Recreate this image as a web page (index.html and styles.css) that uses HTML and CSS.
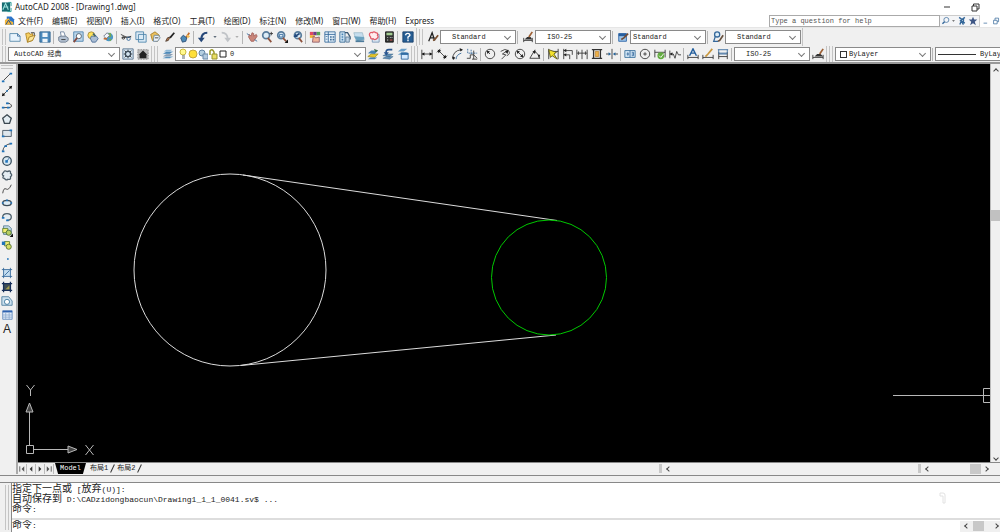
FILE: index.html
```html
<!DOCTYPE html>
<html lang="zh-CN">
<head>
<meta charset="utf-8">
<title>AutoCAD 2008 - [Drawing1.dwg]</title>
<link rel="stylesheet" href="styles.css">
</head>
<body>
<header class="titlebar">
  <svg class="app-icon" viewBox="0 0 12 12"><rect x="1" y="1" width="9" height="10" fill="#176d72"/><path d="M2 9 5 2l3 7M3 6h5" stroke="#9ee0dc" fill="none" stroke-width="1.2"/><path d="M8 1h3v4M7 11h4V7" stroke="#2a9d97" fill="none"/></svg>
  <h1>AutoCAD 2008 - [Drawing1.dwg]</h1>
  <div class="window-buttons">
    <button aria-label="Minimize"><svg viewBox="0 0 10 10"><path class="k" d="M2 5h6"/></svg></button>
    <button aria-label="Restore"><svg viewBox="0 0 10 10"><path class="k" d="M2 4h5v5H2zM3.500 4V2H9v5H7"/></svg></button>
  </div>
</header>
<nav class="menubar">
  <svg class="app-icon" viewBox="0 0 12 12"><path d="M3 1h5l3 3v6H3z" fill="#2c74c9"/><path d="M1 5l4-2 2 3 3 1v3H1z" fill="#f3b63b"/><path d="M2 10l3-5 3 5" stroke="#174b92" fill="none"/></svg>
  <div class="menus">
    <button>文件(F)</button><button>编辑(E)</button><button>视图(V)</button><button>插入(I)</button><button>格式(O)</button><button>工具(T)</button><button>绘图(D)</button><button>标注(N)</button><button>修改(M)</button><button>窗口(W)</button><button>帮助(H)</button><button>Express</button>
  </div>
  <div class="help">
    <input type="text" aria-label="Help" placeholder="Type a question for help">
    <div class="help-buttons">
      <button aria-label="Search"><svg viewBox="0 0 14 14"><circle cx="7.500" cy="5.500" r="3.500" class="b" fill="#dce9f8"/><path class="b w" d="M5 8l-3 3"/></svg></button>
      <button aria-label="Search options" class="dot"><svg viewBox="0 0 4 14"><path d="M0 6h4L2 8z" fill="#555"/></svg></button>
      <button aria-label="Communication"><svg viewBox="0 0 14 14"><path class="b w" d="M3 2l4 3 4-3M4 12l2-5 3 5M4 6l7 4M9 3v5"/></svg></button>
      <button aria-label="Favorites"><svg viewBox="0 0 14 14"><path d="M7 1l1.700 4H13L9.500 8l1.500 5-4-3-4 3 1.500-5L1 5h4.300z" fill="#3e5685"/></svg></button>
    </div>
    <button class="doc" aria-label="Minimize drawing"><svg viewBox="0 0 14 14"><path class="b" d="M5 10h5"/></svg></button>
    <button class="doc" aria-label="Restore drawing"><svg viewBox="0 0 14 14"><path class="b" d="M5 6h5v5H5zM7 6V3h5v5h-2"/></svg></button>
  </div>
</nav>

<div class="toolrow row-a">
  <div class="toolbar">
    <i class="grip"></i>
    <div class="g g3">
      <button aria-label="New"><svg viewBox="0 0 14 14"><path d="M1 3h9l3 3v6H1z" fill="#e8f3fc" stroke="#5487aa"/><path class="b" d="M10 3v3h3"/></svg></button>
      <button aria-label="Open"><svg viewBox="0 0 14 14"><path d="M2 3l4-1 1 2 3-1v8l-6 2z" fill="#f6cf62" stroke="#b18421"/><path d="M4 13l2-6 7-2-3 6z" fill="#fbe59b" stroke="#a47c23"/><path d="M8 2l4 0v3" class="k"/></svg></button>
      <button aria-label="Save"><svg viewBox="0 0 14 14"><path d="M1 1h12v12H1z" fill="#4b8abd" stroke="#31658f"/><path d="M4 2h6v5H4zM4 9h6v4H4z" fill="#eef5fa"/></svg></button>
    </div><i class="sep"></i>
    <div class="g g4">
      <button aria-label="Plot"><svg viewBox="0 0 14 14"><path d="M4 1h4l2 6H5z" fill="#fff" stroke="#69809b"/><path d="M2 7l3-1h5l3 2v3l-3 2H4l-2-2z" fill="#b3c1d2" stroke="#6c7b8e"/><path class="k" d="M5 10h5"/></svg></button>
      <button aria-label="Plot preview"><svg viewBox="0 0 14 14"><path d="M2 1h11v11H2z" fill="#b9d5ea" stroke="#4c82ad"/><circle cx="8" cy="6" r="3" fill="#fff" stroke="#456"/><path d="M6 8l-4 5" stroke="#87483c" stroke-width="2"/></svg></button>
      <button aria-label="Publish"><svg viewBox="0 0 14 14"><circle cx="5" cy="5" r="4" fill="#ffe25a" stroke="#9f8540"/><path d="M5 6h6l2 3-3 4H6L4 9z" fill="#aabdd4" stroke="#496c96"/><path d="M7 3l3 3" stroke="#42666e" stroke-width="2"/></svg></button>
      <button aria-label="3D DWF"><svg viewBox="0 0 14 14"><circle cx="8" cy="7" r="5" fill="#4b97c5"/><path d="M7 3l3-1 1 4-3 2zM8 10l3-1-1 3z" fill="#76ac4a"/><path d="M2 6l4-4 3 3-4 4z" fill="#f0f5fa" stroke="#778"/><path d="M2 9h4" stroke="#c36b34" stroke-width="2"/></svg></button>
    </div><i class="sep"></i>
    <div class="g g5">
      <button aria-label="Cut"><svg viewBox="0 0 14 14"><path class="k" d="M1 4l8 4 4-2M2 8l6-1h5"/><circle cx="10" cy="9" r="2" class="b"/><circle cx="4" cy="8" r="1.500" class="k"/></svg></button>
      <button aria-label="Copy"><svg viewBox="0 0 14 14"><path d="M1 1h9v9H1zM4 4h9v9H4z" fill="#dcebf6" stroke="#4b83aa"/></svg></button>
      <button aria-label="Paste"><svg viewBox="0 0 14 14"><path d="M2 4l5-3 5 4-2 7-6-1z" fill="#ecc15d" stroke="#a37b27"/><path d="M6 5h5l2 3-3 4H5z" fill="#edf3f8" stroke="#66839d"/><path class="k" d="M7 8h4"/></svg></button>
      <button aria-label="Match properties"><svg viewBox="0 0 14 14"><path d="M12 2L7 8" stroke="#222" stroke-width="2"/><path d="M7 7l-2 4-3 1 2-4z" fill="#bc7847" stroke="#4b3c31"/></svg></button>
      <button aria-label="Block editor"><svg viewBox="0 0 14 14"><path d="M12 2L8 8" stroke="#c36e2b" stroke-width="2"/><path d="M2 8l3-3 4 3-1 4-4 1z" fill="#4d8bb8" stroke="#284a70"/><path d="M9 4l4 2-3 3z" fill="#f3bf58"/></svg></button>
    </div><i class="sep"></i>
    <div class="g undo">
      <button aria-label="Undo"><svg viewBox="0 0 14 14"><path d="M12 2C7 2 5 5 5 10" stroke="#254779" stroke-width="2.500" fill="none"/><path d="M1 8h8l-4 5z" fill="#254779"/></svg></button>
      <button class="dot" aria-label="Undo list"><svg viewBox="0 0 4 14"><path d="M0 6h4L2 8z" fill="#345"/></svg></button>
      <button aria-label="Redo"><svg viewBox="0 0 14 14"><path d="M2 2c5 0 7 3 7 8" stroke="#c1c4c8" stroke-width="2" fill="none"/><path d="M5 8h8l-4 5z" fill="#c1c4c8"/></svg></button>
      <button class="dot" aria-label="Redo list"><svg viewBox="0 0 4 14"><path d="M0 6h4L2 8z" fill="#999"/></svg></button>
    </div><i class="sep"></i>
    <div class="g g4">
      <button aria-label="Pan"><svg viewBox="0 0 14 14"><path d="M3 7l1-3 2 2 1-4 2 1v3l3-2 1 2-4 6H6z" fill="#c98579" stroke="#a4625b"/><path class="b" d="M1 3l3 2M10 10l3 2"/></svg></button>
      <button aria-label="Zoom realtime"><svg viewBox="0 0 14 14"><circle class="lens" cx="6" cy="5" r="4"/><path class="handle" d="M8 8l4 5"/><path class="k" d="M10 3h4M12 1v4"/></svg></button>
      <button aria-label="Zoom window"><svg viewBox="0 0 14 14"><circle class="lens" cx="6" cy="5" r="4"/><path class="handle" d="M8 8l4 4"/><path class="b" d="M4 4h4v3H4z"/><path d="M14 10v4h-4z" fill="#111"/></svg></button>
      <button aria-label="Zoom previous"><svg viewBox="0 0 14 14"><circle class="lens" cx="8" cy="5" r="4"/><path class="handle" d="M9 8l4 5"/><path d="M10 3L5 6" stroke="#224a7f" stroke-width="2"/><path d="M3 7l2-4 3 4z" fill="#224a7f"/></svg></button>
    </div><i class="sep"></i>
    <div class="g g6">
      <button aria-label="Properties"><svg viewBox="0 0 14 14"><path fill="#df4962" d="M1 1h4v4H1z"/><path fill="#6d3984" d="M5 1h4v4H5z"/><path fill="#52a353" d="M9 1h4v4H9z"/><path fill="#efb52d" d="M1 5h6v3H1z"/><path d="M4 13l1-7 3 2 4-1v6z" fill="#f0b39a" stroke="#8c5c6b"/></svg></button>
      <button aria-label="DesignCenter"><svg viewBox="0 0 14 14"><path d="M1 1h12v12H1z" fill="#e7f2fb" stroke="#356b9a"/><path class="b" d="M5 1v12M1 4h12"/><path d="M7 6h2v2H7zm3 0h2v2h-2zM7 9h2v2H7zm3 0h2v2h-2zM2 6h2v1H2zm0 3h2v1H2z" fill="#416f9a"/></svg></button>
      <button aria-label="Tool palettes"><svg viewBox="0 0 14 14"><path d="M1 1h6v12H1z" fill="#d6e8f7" stroke="#2f628f"/><path d="M3 3h2v2H3zm0 3h2v2H3zm0 3h2v2H3z" fill="#4883b2"/><path d="M7 2h3l3 5v3" fill="none" stroke="#395873" stroke-width="1.500"/><path d="M8 7h4v6H8z" fill="#bfd3e5" stroke="#5d7d99"/></svg></button>
      <button aria-label="Sheet set"><svg viewBox="0 0 14 14"><path d="M1 2h10l2 8-9 2z" fill="#c5deee" stroke="#a2bdcc"/><path d="M1 6l12 1v3L5 12z" fill="#6ba2bf"/><path d="M3 12h10" stroke="#4d7b9b" stroke-width="2"/></svg></button>
      <button aria-label="Markup"><svg viewBox="0 0 14 14"><path d="M5 4h8v9H5z" fill="#d8e8f4" stroke="#7895b3"/><path d="M2 3q1-2 3-1 2-2 4 0 3 0 2 3 2 2-1 4-2 2-4 0-3 1-3-2-2-2-1-4z" fill="#ffecee" stroke="#e15b69" stroke-width="1.500"/></svg></button>
      <button aria-label="Calculator"><svg viewBox="0 0 14 14"><path d="M3 1h9v12H3z" fill="#343635" stroke="#111"/><path d="M4 2h7v3H4z" fill="#a3cc91"/><path d="M5 7h1v1H5zm3 0h1v1H8zm2 0h1v1h-1zM5 10h1v1H5z" fill="#fff"/><path d="M8 10h3v1H8z" fill="#e55"/></svg></button>
    </div><i class="sep"></i>
    <div class="g g1"><button aria-label="Help"><svg viewBox="0 0 14 14"><path d="M1 1h12v12H1z" fill="#275e94" stroke="#183f69"/><path d="M4 5q1-3 4-2 3 2-1 4v2M7 10v2" stroke="#fff" stroke-width="1.600" fill="none"/></svg></button></div>
  </div>
  <div class="toolbar styles">
    <i class="grip"></i>
    <div class="g g1"><button aria-label="Text style"><svg viewBox="0 0 14 14"><path d="M2 12L6 2l3 9M4 8h5" stroke="#222" stroke-width="1.500" fill="none"/><path d="M13 5l-4 5-2 1" stroke="#7d5132" stroke-width="2" fill="none"/></svg></button></div>
    <label class="combo pad"><select aria-label="Text style"><option>Standard</option></select></label><i class="sep wide"></i>
    <div class="g g1"><button aria-label="Dimension style"><svg viewBox="0 0 14 14"><path class="k" d="M2 8v5M12 8v5M2 11h10"/><path d="M3 10l3-3h4l2 3z" fill="#333"/><path d="M12 1L8 7" stroke="#9d6035" stroke-width="2"/></svg></button></div>
    <label class="combo pad"><select aria-label="Dimension style"><option>ISO-25</option></select></label><i class="sep wide"></i>
    <div class="g g1"><button aria-label="Table style"><svg viewBox="0 0 14 14"><path d="M2 3h9v9H2z" fill="#9bc3e8" stroke="#2c65a7"/><path d="M2 3h9v3H2z" fill="#285f9f"/><path d="M13 3L8 8l-3 2" stroke="#704b36" stroke-width="2" fill="none"/></svg></button></div>
    <label class="combo"><select aria-label="Table style"><option>Standard</option></select></label><i class="sep wide"></i>
    <div class="g g1"><button aria-label="Multileader style"><svg viewBox="0 0 14 14"><circle cx="6" cy="4" r="3" stroke="#35689a" stroke-width="1.500" fill="#dcecf7"/><path d="M4 6l-2 6h5" stroke="#35689a" stroke-width="1.500" fill="none"/><path d="M13 5l-4 6-2 1" stroke="#66503e" stroke-width="2" fill="none"/></svg></button></div>
    <label class="combo pad"><select aria-label="Multileader style"><option>Standard</option></select></label>
  </div>
</div>

<div class="toolrow row-b">
  <div class="toolbar">
    <i class="grip"></i>
    <label class="combo workspace"><select aria-label="Workspace"><option>AutoCAD 经典</option></select></label>
    <div class="g g2">
      <button aria-label="Workspace settings"><svg viewBox="0 0 14 14"><path d="M1 1h12v12H1z" fill="#d4e4f0" stroke="#55718d"/><circle cx="7" cy="7" r="3" stroke="#3a4c5c" stroke-width="1.500" fill="none"/><path class="k" d="M7 2v2M7 10v2M2 7h2M10 7h2M3 3l2 2M9 9l2 2M11 3L9 5M5 9l-2 2"/></svg></button>
      <button aria-label="My workspace"><svg viewBox="0 0 14 14"><path d="M1 2h12v11H1z" fill="#bbb" stroke="#888" stroke-dasharray="2 1"/><path d="M2 8l5-5 5 5h-1v4H3V8z" fill="#222"/></svg></button>
    </div>
  </div>
  <div class="toolbar">
    <i class="grip"></i>
    <div class="g g1"><button aria-label="Layers"><svg viewBox="0 0 14 14"><path d="M1 10l4-3h8l-4 3z" fill="#8a9eb3"/><path d="M1 7l4-3h8l-4 3zM1 12l4-2h8l-4 2z" fill="#4d88b7" stroke="#c1d6e7" stroke-width=".5"/><path d="M2 4l3-2h7L9 4z" fill="#8eb9d8"/></svg></button></div>
    <label class="combo layer"><span class="layer-icons">
      <svg viewBox="0 0 10 12"><circle cx="5" cy="4" r="3" fill="#fff98e" stroke="#cbb83e"/><path d="M4 8h3M4 10h3" stroke="#5c6870"/></svg>
      <svg viewBox="0 0 10 12"><circle cx="5" cy="6" r="4" fill="#ffdf38" stroke="#c6a83b"/></svg>
      <svg viewBox="0 0 10 12"><circle cx="4" cy="5" r="3" fill="#b5cfe0" stroke="#6284a5"/><path d="M5 6h5v5H5z" fill="#b3cbdf" stroke="#6a89a7"/></svg>
      <svg viewBox="0 0 10 12"><path d="M2 7V3q2-3 4 1v3" fill="none" stroke="#99992b" stroke-width="1.500"/><path d="M4 6h5v5H4z" fill="#e9de65" stroke="#979331"/></svg>
      <svg viewBox="0 0 10 12"><path d="M2 3h6v6H2z" fill="#fff" stroke="#222"/></svg>
      </span><select aria-label="Layer"><option>0</option></select></label>
    <div class="g g3">
      <button aria-label="Make current"><svg viewBox="0 0 14 14"><path d="M1 10l4-3h8l-4 4z" fill="#e3c52e" stroke="#a5972b"/><path d="M1 6l4-3h8L9 7zM1 13l3-2h8l-3 2z" fill="#4783b3"/><path d="M8 1l2 4 3-2" fill="#416f4d"/></svg></button>
      <button aria-label="Layer previous"><svg viewBox="0 0 14 14"><path d="M1 9l4-2h8l-4 3zM1 12l4-2h8l-4 3z" fill="#618eb5" stroke="#345e83" stroke-width=".5"/><path d="M12 2H8Q4 2 5 6" stroke="#2b568f" stroke-width="2" fill="none"/><path d="M2 5h6L5 9z" fill="#2b568f"/></svg></button>
      <button aria-label="Layer states"><svg viewBox="0 0 14 14"><path d="M1 4l4-3h7L8 4zM1 8l4-3h7L8 8z" fill="#6b9fc8"/><path d="M5 6h8v7H5z" fill="#d5eaff" stroke="#275f97"/><path d="M5 6h8v2H5z" fill="#27659e"/></svg></button>
    </div>
  </div>
  <div class="toolbar">
    <i class="grip"></i>
    <div class="g g4">
      <button aria-label="Linear"><svg viewBox="0 0 14 14"><path class="k" d="M1 2v11M13 2v11M1 7h12"/><path d="M1 7l3-2v4zM13 7l-3-2v4z" fill="#111"/></svg></button>
      <button aria-label="Aligned"><svg viewBox="0 0 14 14"><path class="k" d="M1 5l4-4M9 13l4-4M3 3l8 8"/><path d="M2 2l4 1-3 3zM12 12L8 11l3-3z" fill="#111"/></svg></button>
      <button aria-label="Arc length"><svg viewBox="0 0 14 14"><path class="k" d="M2 13Q2 3 12 2"/><path class="b" d="M6 13q0-5 6-7"/><path d="M10 0l4 2-3 2zM1 10l2 4 2-3z" fill="#222"/></svg></button>
      <button aria-label="Ordinate"><svg viewBox="0 0 14 14"><path class="b" stroke-dasharray="2 1" d="M2 1v5h11M6 2v5"/><path class="k" d="M1 12h4V8h4l4 4M9 3v10M7 13h6"/></svg></button>
    </div><i class="sep"></i>
    <div class="g g4">
      <button aria-label="Radius"><svg viewBox="0 0 14 14"><circle class="k" cx="7" cy="7" r="5.500"/><path class="k" d="M7 7L4 4"/><path d="M3 3l4 1-3 3z" fill="#222"/></svg></button>
      <button aria-label="Jogged"><svg viewBox="0 0 14 14"><path class="k" d="M2 4q5-4 9-1 3 4-2 6M3 13l5-5-4-1 6-4"/><path d="M11 2l-1 5-3-3z" fill="#222"/></svg></button>
      <button aria-label="Diameter"><svg viewBox="0 0 14 14"><circle class="k" cx="7" cy="7" r="5.500"/><path class="k" d="M4 4l6 6"/><path d="M3 3l4 1-3 3zM11 11l-4-1 3-3z" fill="#222"/></svg></button>
      <button aria-label="Angular"><svg viewBox="0 0 14 14"><path class="k" d="M13 12H1l6-10M5 4q6 1 7 8"/><path d="M4 4l4-1-1 4zM10 8l3 0-1 4z" fill="#222"/></svg></button>
    </div><i class="sep"></i>
    <div class="g g5">
      <button aria-label="Quick dimension"><svg viewBox="0 0 14 14"><path class="k" d="M2 1v12M13 1v12M2 4h11"/><path d="M2 2l9 3-3 2 4 6-6-4-2 2z" fill="#f4e22c" stroke="#555316"/></svg></button>
      <button aria-label="Baseline"><svg viewBox="0 0 14 14"><path class="k" d="M2 1v12M2 3h10v5M2 8h7v5"/><path d="M2 3l3-2v4zM2 8l3-2v4z" fill="#222"/></svg></button>
      <button aria-label="Continue"><svg viewBox="0 0 14 14"><path class="k" d="M1 2v11M7 2v11M13 2v11M1 6h12M3 4v4M11 4v4"/></svg></button>
      <button aria-label="Dimension space"><svg viewBox="0 0 14 14"><path class="k" stroke-width="1.500" d="M1 2h12M1 12h12M3 2v10M11 2v10"/><path d="M5 4h4v6H5z" fill="#edb047" stroke="#c28b3a"/></svg></button>
      <button aria-label="Dimension break"><svg viewBox="0 0 14 14"><path class="k" d="M7 1v12M0 7h4M10 7h4"/><path d="M6 7L3 5v4zM8 7l3-2v4z" fill="#26669e"/></svg></button>
    </div><i class="sep"></i>
    <div class="g g4">
      <button aria-label="Tolerance"><svg viewBox="0 0 14 14"><path d="M1 3h12v8H1z" fill="#d4e7f6" stroke="#376e9a"/><path class="b" d="M7 3v8M3 7h3M4.500 5v4M9 5h2v4H9M9 7h2"/></svg></button>
      <button aria-label="Center mark"><svg viewBox="0 0 14 14"><circle class="k" cx="7" cy="7" r="5.500"/><path class="k" d="M5 7h4M7 5v4"/></svg></button>
      <button aria-label="Inspection"><svg viewBox="0 0 14 14"><path class="k" d="M1 2v9M13 2v9M1 5h12"/><circle cx="8" cy="9" r="4" fill="#63ac40"/><path d="M6 9l2 2 3-4" stroke="#fff" fill="none"/></svg></button>
      <button aria-label="Jogged linear"><svg viewBox="0 0 14 14"><path class="k" d="M1 3v9M1 7h4l2 5 2-8 2 4h3"/><path d="M1 7l3-2v4z" fill="#222"/></svg></button>
    </div><i class="sep"></i>
    <div class="g g3">
      <button aria-label="Dimension edit"><svg viewBox="0 0 14 14"><path class="k" d="M1 8v5M13 8v5M1 11h12"/><path d="M3 9l4-8 4 8M5 6h4" stroke="#245f9d" stroke-width="1.700" fill="none"/></svg></button>
      <button aria-label="Text edit"><svg viewBox="0 0 14 14"><path class="k" d="M1 8v5M13 8v5M1 11h12"/><path d="M12 1L7 7l-3 3" stroke="#c7963d" stroke-width="2" fill="none"/></svg></button>
      <button aria-label="Dimension update"><svg viewBox="0 0 14 14"><path class="k" d="M2 5v8M12 5v8M2 10h10"/><path class="b" d="M1 2h12M2 2v4h10V2M2 7h10"/></svg></button>
    </div><i class="sep"></i>
    <label class="combo pad"><select aria-label="Dimension style control"><option>ISO-25</option></select></label>
    <div class="g g1"><button aria-label="Dimension style manager"><svg viewBox="0 0 14 14"><path class="k" d="M1 8v5M13 8v5M1 11h12"/><path d="M3 10l3-3h4l3 3z" fill="#333"/><path d="M13 1L9 7" stroke="#9d6035" stroke-width="2"/></svg></button></div>
  </div>
  <div class="toolbar last">
    <i class="grip"></i>
    <label class="combo color"><span class="swatch"></span><select aria-label="Color"><option>ByLayer</option></select></label><i class="sep"></i>
    <label class="combo linetype"><span class="stroke-sample"></span><select aria-label="Linetype"><option>ByLayer</option></select></label>
  </div>
</div>

<main class="work">
  <div class="rail">
    <i class="grip-h"></i>
    <button aria-label="Line"><svg viewBox="0 0 14 14"><path class="k" d="M3 11l8-8"/><path class="p" d="M1 11h3v2H1zM10 2h3v2h-3z"/></svg></button>
    <button aria-label="Construction line"><svg viewBox="0 0 14 14"><path class="k" d="M2 12L12 2"/><path d="M9 2l4-1-1 4zM1 13l1-4 3 3z" fill="#111"/><path class="p" d="M6 6h2v2H6z"/></svg></button>
    <button aria-label="Polyline"><svg viewBox="0 0 14 14"><path class="k" d="M2 10h7q4 0 3-3-1-2-4-2H6"/><path class="p" d="M1 9h3v2H1zM7 9h3v2H7zM6 4h3v2H6z"/></svg></button>
    <button aria-label="Polygon"><svg viewBox="0 0 14 14"><path d="M7 2l5 4-2 6H4L2 6z" fill="#e4edf2" stroke="#3c4850" stroke-width="1.500"/></svg></button>
    <button aria-label="Rectangle"><svg viewBox="0 0 14 14"><path d="M2 4h10v7H2z" fill="#dfe7ed" stroke="#42505c"/><path class="p" d="M1 10h3v2H1zM10 3h3v2h-3z"/></svg></button>
    <button aria-label="Arc"><svg viewBox="0 0 14 14"><path class="k" d="M2 12Q3 4 12 3"/><path class="p" d="M1 11h3v2H1zM4 5h3v2H4zM10 2h3v2h-3z"/></svg></button>
    <button aria-label="Circle"><svg viewBox="0 0 14 14"><circle cx="7" cy="7" r="5" fill="#d8e9f3" stroke="#3c515f" stroke-width="1.500"/><path class="b" d="M7 7l3-4"/><path class="p" d="M5 6h3v3H5z"/></svg></button>
    <button aria-label="Revision cloud"><svg viewBox="0 0 14 14"><path d="M3 8q-3-2 0-4 1-3 4-1 5-2 4 2 3 2 0 4 1 4-3 3-2 2-4-1-3 0-1-3z" fill="#e4edf3" stroke="#4c5d69" stroke-width="1.500"/></svg></button>
    <button aria-label="Spline"><svg viewBox="0 0 14 14"><path class="k" d="M2 12q1-7 4-5t6-5"/></svg></button>
    <button aria-label="Ellipse"><svg viewBox="0 0 14 14"><ellipse cx="7" cy="7" rx="5" ry="3" fill="#ddecf5" stroke="#3c4c58" stroke-width="1.500"/><path class="p" d="M1 6h2v2H1zM11 6h2v2h-2zM6 3h2v2H6z"/></svg></button>
    <button aria-label="Ellipse arc"><svg viewBox="0 0 14 14"><path d="M2 7q0-4 5-4t5 4-5 4" fill="#e4edf3" stroke="#4c5d69" stroke-width="1.500"/><path class="p" d="M1 7h3v2H1zM6 10h3v2H6z"/></svg></button>
    <button aria-label="Insert block"><svg viewBox="0 0 14 14"><path d="M3 1h6l3 3v7H3z" fill="#c2d9e7" stroke="#597d94"/><path d="M2 4h6v5H2z" fill="#f3ed70" stroke="#587c30"/><circle cx="9" cy="9" r="3" fill="#b9cf64" stroke="#476d35"/><path d="M14 10v4h-4z" fill="#111"/></svg></button>
    <button aria-label="Make block"><svg viewBox="0 0 14 14"><path d="M4 3h6v5H4z" fill="#f3ed70" stroke="#587c30"/><circle cx="9" cy="9" r="3" fill="#d6dd63" stroke="#506e33"/><path class="p" d="M1 3h4v4H1z"/></svg></button>
    <button aria-label="Point"><svg viewBox="0 0 14 14"><path class="p" d="M7 6h2v2H7z"/></svg></button>
    <button aria-label="Hatch"><svg viewBox="0 0 14 14"><path d="M3 3h8v8H3z" fill="#c5def0"/><path class="b" d="M3 1v12M11 1v12M1 3h12M1 11h12M4 10l6-6"/></svg></button>
    <button aria-label="Gradient"><svg viewBox="0 0 14 14"><path d="M3 3h8v8H3z" fill="#3f4e56"/><path d="M5 10l5-5v5z" fill="#a39c4c"/><path d="M3 1v12M11 1v12M1 3h12M1 11h12" stroke="#172f59" stroke-width="1.500"/></svg></button>
    <button aria-label="Region"><svg viewBox="0 0 14 14"><path d="M1 2h8l4 5v5H1z" fill="#cbe0ee" stroke="#4c7c9d"/><circle cx="7" cy="8" r="3" fill="#fff" stroke="#347098"/></svg></button>
    <button aria-label="Table"><svg viewBox="0 0 14 14"><path d="M2 2h11v10H2z" fill="#e3edf9" stroke="#648bbb"/><path d="M2 2h11v2H2z" fill="#2e62b0"/><path d="M2 7h11M2 9.500h11M5.500 4v8M9.500 4v8" stroke="#8facd0"/></svg></button>
    <button aria-label="Multiline text" class="mtext">A</button>
  </div>
  <section class="viewport">
    <svg class="drawing" viewBox="18 64 972 398" preserveAspectRatio="xMinYMin meet" fill="none" stroke="#dcdcdc">
      <circle cx="230" cy="270" r="96"/>
      <path d="M243 175L557 220.500M241 365.500L556 335"/>
      <circle cx="549" cy="277.500" r="57.500" stroke="#00c800"/>
      <g stroke="#b8b8b8">
        <path d="M26.500 445.500h7v8h-7zM29.500 445V412M33 449.500H68"/>
        <path d="M29.500 403l-3.500 9h7zM77 449.500l-9-3.500v7z" fill="#444"/>
        <path d="M26.500 385l4 5 4-5M30.500 390v6M85.500 445l8 10M93.500 445l-8 10"/>
        <path d="M893 395.500h97M990 388.500h-6.500v14h6.500"/>
      </g>
    </svg>
  </section>
  <div class="vscroll"><i class="chev up"></i><i class="thumb"></i><i class="chev down"></i></div>
  <div class="tabrow">
    <div class="tabs">
      <button class="nav" aria-label="First"><svg viewBox="0 0 9 10"><path d="M2 2v6" stroke="#555"/><path d="M7 2v6L4 5z" fill="#555"/></svg></button>
      <button class="nav" aria-label="Previous"><svg viewBox="0 0 9 10"><path d="M6 2v6L3 5z" fill="#333"/></svg></button>
      <button class="nav" aria-label="Next"><svg viewBox="0 0 9 10"><path d="M3 2v6l3-3z" fill="#333"/></svg></button>
      <button class="nav" aria-label="Last"><svg viewBox="0 0 9 10"><path d="M7 2v6" stroke="#555"/><path d="M2 2v6l3-3z" fill="#555"/></svg></button>
      <button class="tab active">Model</button><button class="tab">布局1</button><i class="slash"></i><button class="tab">布局2</button><i class="slash"></i>
    </div>
    <div class="hscroll main-scroll"><i class="split"></i><i class="chev left"></i></div>
    <div class="hscroll side-scroll"><i class="split"></i><i class="chev left"></i><i class="track"></i><i class="thumb"></i><i class="chev right"></i></div>
  </div>
</main>

<section class="command">
  <div class="command-grip"><i class="grip"></i></div>
  <div class="console">
    <div class="history">
      <p><span class="han">指定下一点或</span> [<span class="han">放弃</span>(U)]:</p>
      <p><span class="han">自动保存到</span> D:\CADzidongbaocun\Drawing1_1_1_0041.sv$ ...</p>
      <p><span class="han">命令</span>:</p>
      <svg class="ghost" viewBox="0 0 10 14"><path d="M2 2h3q2 0 2 2v8H5V5H2z" fill="#fff" stroke="#e2e2e2"/></svg>
    </div>
    <div class="prompt">
      <label for="cmd"><span class="han">命令</span>:</label><input id="cmd" type="text">
      <div class="hscroll"><i class="chev left"></i><i class="thumb"></i><i class="track"></i><i class="chev right"></i></div>
    </div>
  </div>
</section>
</body>
</html>
```
FILE: styles.css
```css
* { box-sizing: border-box; }
body {
  margin: 0;
  height: 100vh;
  display: flex;
  flex-direction: column;
  overflow: hidden;
  background: #f0f0f0;
  color: #222;
  font-family: "Noto Sans", "Noto Sans CJK SC", sans-serif;
}
button {
  border: 0;
  padding: 0;
  background: none;
  color: inherit;
  font: inherit;
}
svg { display: block; }
.k { stroke: #333; fill: none; }
.b { stroke: #35689a; fill: none; }
.w { stroke-width: 2; }
.p { fill: #1f73ba; }
.lens { fill: #dcecf7; stroke: #587c9c; stroke-width: 2; }
.handle { stroke: #8e533e; stroke-width: 2; }

.titlebar, .menubar {
  display: flex;
  align-items: center;
  background: #fff;
  flex: none;
}
.titlebar { height: 14px; padding: 0 20px 0 1px; }
.titlebar h1 { margin: 0; flex: 1; font-size: 8px; font-weight: 400; line-height: 14px; }
.app-icon { width: 11px; height: 12px; margin-right: 3px; }
.window-buttons { display: flex; gap: 18px; }
.window-buttons svg { width: 10px; height: 10px; }

.menubar { height: 13px; padding-left: 4px; }
.menus { display: flex; gap: 9px; flex: 1; font-size: 8px; line-height: 13px; white-space: nowrap; }
.help { display: flex; width: 231px; height: 12px; }
.help input {
  flex: 1;
  min-width: 0;
  padding: 0 1px;
  border: 1px solid #aaa;
  font: 7px "Liberation Mono", monospace;
}
.help input::placeholder { color: #555; }
.help-buttons { display: flex; align-items: center; justify-content: space-around; width: 40px; border: 1px solid #ccc; border-left: 0; background: #f4f5f7; }
.help-buttons svg { width: 10px; height: 10px; }
.help-buttons .dot svg { width: 3px; }
.doc svg { width: 10px; height: 10px; }

.toolrow { display: flex; flex: none; overflow: hidden; }
.row-a { height: 19px; border-top: 1px solid #e6e6e6; }
.row-b { height: 16px; }
.toolbar {
  display: flex;
  align-items: center;
  flex: none;
  padding: 0 1px 0 2px;
  border-right: 1px solid #c4c4c4;
}
.grip { width: 4px; height: 16px; margin-right: 2px; border: 1px solid #c4c4c4; border-width: 0 1px; flex: none; }
.g { display: flex; flex: none; }
.g button { flex: 1; display: flex; justify-content: center; }
.g svg { width: 12px; height: 12px; }
.g1 { width: 15px; }
.g2 { width: 30px; }
.g3 { width: 44px; }
.g4 { width: 59px; }
.g5 { width: 73px; }
.g6 { width: 88px; }
.undo { width: 45px; }
.undo .dot { flex: none; width: 8px; }
.undo .dot svg { width: 4px; }
.sep { width: 4px; height: 13px; flex: none; background: linear-gradient(90deg, transparent 1px, #b5b5b5 1px 2px, transparent 2px); }
.combo {
  position: relative;
  display: flex;
  align-items: center;
  flex: none;
  width: 76px;
  height: 14px;
  padding-left: 2px;
  border: 1px solid #8a8a8a;
  background: #fff;
}
.combo select {
  appearance: none;
  flex: 1;
  min-width: 0;
  height: 12px;
  padding: 0;
  border: 0;
  background: none;
  color: #222;
  font: 7px/12px "Liberation Mono", "Noto Sans CJK SC", monospace;
}
.combo.pad { padding-left: 11px; }
.combo::after {
  content: "";
  position: absolute;
  right: 5px;
  top: 3px;
  width: 4px;
  height: 4px;
  border: solid #777;
  border-width: 0 1px 1px 0;
  transform: rotate(45deg);
}
.workspace { width: 112px; padding-left: 5px; }
.layer { width: 191px; }
.layer-icons { display: flex; margin-right: 2px; }
.layer-icons svg { width: 10px; height: 12px; }
.color { width: 96px; }
.swatch { width: 7px; height: 7px; margin: 0 2px; border: 1px solid #333; }
.toolbar.last { flex: 1; border-right: 0; padding-right: 0; }
.linetype { flex: 1 0 96px; }
.stroke-sample { width: 38px; height: 1px; margin-right: 4px; background: #333; }

.work {
  flex: 1;
  min-height: 0;
  display: grid;
  grid-template-columns: 18px minmax(0, 1fr) 10px;
  grid-template-rows: minmax(0, 1fr) 12px;
  border-top: 2px solid #999;
}
.rail {
  grid-row: 1 / 3;
  display: flex;
  flex-direction: column;
  align-items: center;
  padding: 1px 2px 0 0;
  border-right: 2px solid #aaa;
}
.rail button { width: 14px; height: 14px; display: flex; align-items: center; justify-content: center; flex: none; }
.rail svg { width: 12px; height: 12px; }
.grip-h { width: 12px; height: 4px; margin-bottom: 1px; border: 1px solid #c4c4c4; border-width: 1px 0; flex: none; }
.rail .mtext { font: 12px/14px "Liberation Sans", sans-serif; }
.viewport { background: #000; overflow: hidden; }
.drawing { width: 100%; height: 100%; }

.vscroll { display: flex; flex-direction: column; align-items: center; padding: 5px 0 2px; border-left: 1px solid #bbb; }
.vscroll .thumb { width: 100%; height: 11px; margin: 137px 0 auto; background: #c1c1c1; }
.chev { width: 4px; height: 4px; flex: none; border: solid #444; border-width: 1px 0 0 1px; }
.up { transform: rotate(45deg); }
.right { transform: rotate(135deg); }
.down { transform: rotate(225deg); }
.left { transform: rotate(-45deg); }

.tabrow { grid-column: 2 / 4; display: flex; border-top: 1px solid #888; background: #f0f0f0; }
.tabs { flex: 641; display: flex; align-items: center; }
.nav { border-right: 1px solid #bbb; }
.nav svg { width: 8px; height: 10px; }
.tab { padding: 0 4px; font: 7px/11px "Liberation Mono", "Noto Sans CJK SC", monospace; }
.tab.active { padding: 0 5px; margin-left: 1px; background: #000; color: #fff; clip-path: polygon(0 0, 100% 0, 90% 100%, 10% 100%); }
.slash { width: 1px; height: 9px; background: #333; transform: rotate(25deg); }
.hscroll { display: flex; align-items: center; }
.main-scroll { flex: 259; }
.side-scroll { flex: 70; padding-right: 12px; }
.split { width: 3px; height: 9px; margin-right: 5px; background: #c8c8c8; }
.track { flex: 1; }
.hscroll .thumb { width: 11px; height: 10px; margin-right: 3px; background: #c8c8c8; }

.command { flex: none; display: flex; height: 57px; margin-top: 1px; border-top: 1px solid #888; padding-top: 6px; }
.command-grip { width: 11px; padding: 2px 0 2px 5px; border-top: 1px solid #888; }
.command-grip .grip { display: block; height: 100%; }
.console {
  flex: 1;
  min-width: 0;
  display: flex;
  flex-direction: column;
  border: solid #888;
  border-width: 1px 0 0 1px;
  background: #fff;
  color: #222;
  font: 8px/10px "Liberation Mono", "Noto Sans CJK SC", monospace;
}
.han { font-size: 10px; }
.history { position: relative; flex: 1; padding-top: 2px; border-bottom: 2px solid #ddd; }
.history p { margin: 0; height: 10px; white-space: pre; }
.ghost { position: absolute; right: 52px; top: 8px; width: 10px; height: 14px; }
.prompt { display: flex; align-items: center; height: 12px; }
.prompt input { flex: 1; min-width: 0; height: 10px; padding: 0; border: 0; outline: 0; font: inherit; }
.prompt .hscroll { width: 40px; height: 11px; padding: 0 2px 0 5px; background: #f0f0f0; }
.prompt .thumb { margin-left: 4px; }
```
